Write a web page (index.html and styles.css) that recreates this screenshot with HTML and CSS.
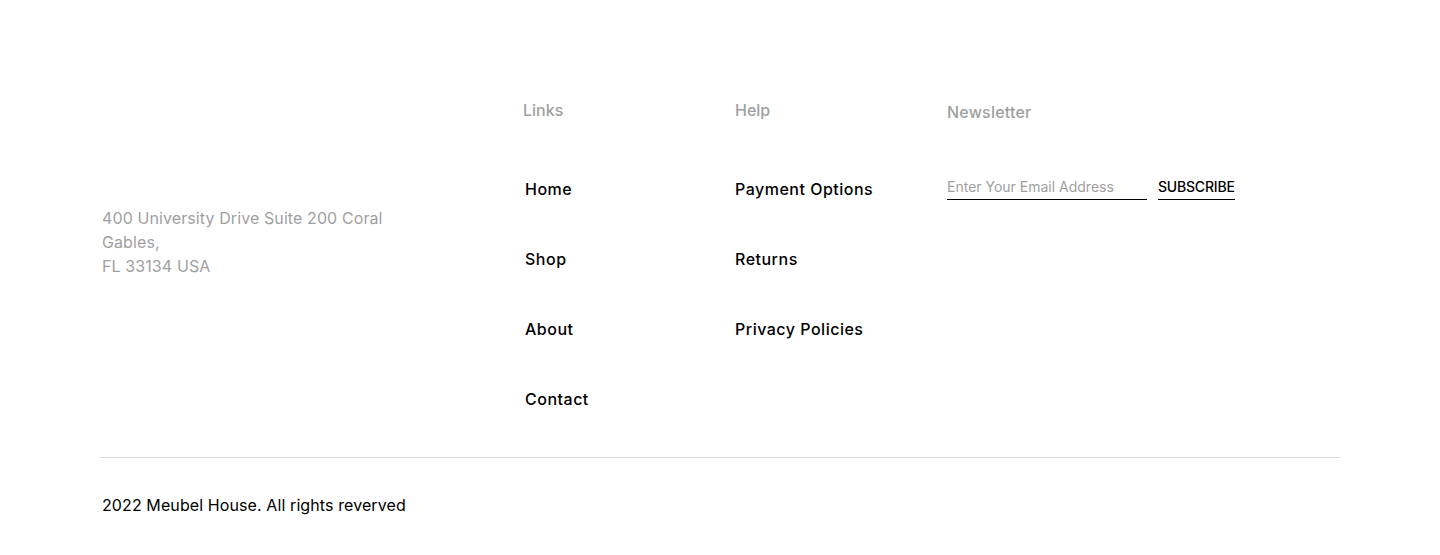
FILE: index.html
```html
<!DOCTYPE html>
<html lang="en">
<head>
<meta charset="utf-8">
<title>Meubel House Footer</title>
<link rel="stylesheet" href="styles.css">
</head>
<body>
<footer class="footer">
  <div class="top">
    <div class="address">
      <p>400 University Drive Suite 200 Coral Gables,<br>FL 33134 USA</p>
    </div>
    <nav class="col">
      <h4 class="heading">Links</h4>
      <ul class="list list-links">
        <li><a href="#">Home</a></li>
        <li><a href="#">Shop</a></li>
        <li><a href="#">About</a></li>
        <li><a href="#">Contact</a></li>
      </ul>
    </nav>
    <nav class="col">
      <h4 class="heading">Help</h4>
      <ul class="list">
        <li><a href="#">Payment Options</a></li>
        <li><a href="#">Returns</a></li>
        <li><a href="#">Privacy Policies</a></li>
      </ul>
    </nav>
    <div class="col newsletter">
      <h4 class="heading heading-news">Newsletter</h4>
      <form class="subscribe" onsubmit="return false">
        <input class="email" type="email" placeholder="Enter Your Email Address">
        <button class="btn" type="submit">SUBSCRIBE</button>
      </form>
    </div>
  </div>
  <div class="rule"></div>
  <p class="copy">2022 Meubel House. All rights reverved</p>
</footer>
</body>
</html>
```
FILE: styles.css
```css
* { box-sizing: border-box; }
html, body { margin: 0; padding: 0; background: #fff; }
body {
  font-family: "Inter", "Noto Sans", "DejaVu Sans", sans-serif;
  color: #000;
}
.footer {
  width: 1240px;
  margin: 0 auto;
  padding-top: 98px;
}
.top {
  display: flex;
  align-items: flex-start;
}
.address {
  width: 423px;
  padding-left: 2px;
  padding-top: 108px;
}
.address p {
  margin: 0;
  width: 290px;
  font-size: 16px;
  line-height: 24px;
  color: #9f9f9f;
  letter-spacing: 0.1px;
}
.col { width: 212px; }
.heading {
  margin: 0;
  font-size: 16px;
  line-height: 24px;
  font-weight: 500;
  color: #9f9f9f;
}
.heading-news { margin-top: 2px; letter-spacing: 0.2px; }
.list {
  list-style: none;
  margin: 55px 0 0;
  padding: 0;
  display: flex;
  flex-direction: column;
  gap: 46px;
}
.list-links { padding-left: 2px; }
.list a {
  display: block;
  font-size: 16px;
  line-height: 24px;
  font-weight: 500;
  letter-spacing: 0.5px;
  color: #000;
  text-decoration: none;
}
.newsletter { width: auto; }
.subscribe {
  margin-top: 51px;
  display: flex;
  gap: 11px;
}
.email {
  width: 200px;
  border: 0;
  border-bottom: 1px solid #000;
  padding: 0 0 1px;
  font: inherit;
  font-size: 14px;
  line-height: 24px;
  height: 25px;
  outline: none;
  color: #000;
}
.email::placeholder { color: #9f9f9f; }
.btn {
  border: 0;
  border-bottom: 1px solid #000;
  background: none;
  padding: 0 0 1px;
  font: inherit;
  font-size: 14px;
  font-weight: 500;
  letter-spacing: -0.2px;
  line-height: 24px;
  height: 25px;
  color: #000;
  cursor: pointer;
}
.rule {
  margin-top: 46px;
  height: 1px;
  background: #d9d9d9;
}
.copy {
  margin: 35px 0 0;
  padding-left: 2px;
  font-size: 16px;
  line-height: 24px;
  letter-spacing: 0.1px;
  color: #000;
}
```
